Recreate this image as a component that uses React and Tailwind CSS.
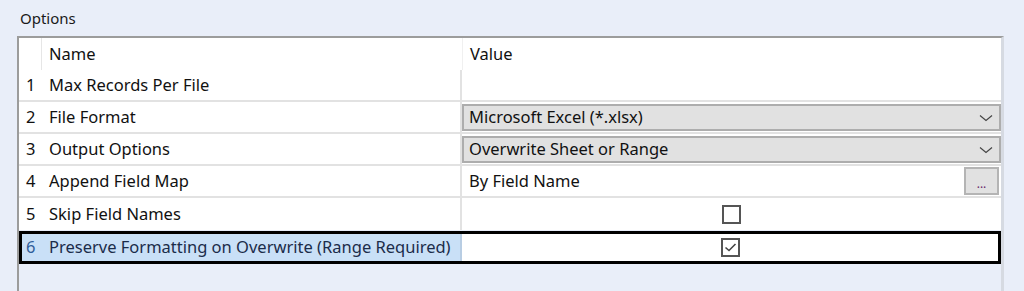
import React from 'react';

const rows = [
  { n: 1, name: 'Max Records Per File', kind: 'empty' },
  { n: 2, name: 'File Format', kind: 'combo', value: 'Microsoft Excel (*.xlsx)' },
  { n: 3, name: 'Output Options', kind: 'combo', value: 'Overwrite Sheet or Range' },
  { n: 4, name: 'Append Field Map', kind: 'button', value: 'By Field Name' },
  { n: 5, name: 'Skip Field Names', kind: 'check', checked: false },
  { n: 6, name: 'Preserve Formatting on Overwrite (Range Required)', kind: 'check', checked: true, selected: true },
];

function Chevron() {
  return (
    <svg width="14" height="8" viewBox="0 0 14 8" className="shrink-0">
      <path d="M1 1.5 L7 6.5 L13 1.5" fill="none" stroke="#444" strokeWidth="1.2" />
    </svg>
  );
}

function CheckBox({ checked }) {
  return (
    <div className="w-[19px] h-[19px] border-2 border-[#555] bg-white flex items-center justify-center">
      {checked && (
        <svg width="15" height="15" viewBox="0 0 15 15">
          <path d="M2.5 7.5 L6 10.5 L12.5 4" fill="none" stroke="#444" strokeWidth="1.6" />
        </svg>
      )}
    </div>
  );
}

function ValueCell({ row }) {
  if (row.kind === 'combo') {
    return (
      <div className="h-full pt-[2px] pb-[1px]">
        <div className="h-full bg-[#e1e1e1] border-2 border-[#adadad] flex items-center justify-between pl-[5px] pr-[6px]">
          <span>{row.value}</span>
          <Chevron />
        </div>
      </div>
    );
  }
  if (row.kind === 'button') {
    return (
      <div className="h-full flex items-center justify-between pl-[7px] pr-[2px]">
        <span>{row.value}</span>
        <div className="w-[35px] h-[28px] border-2 border-[#b4b4b4] bg-[#e1e1e1] flex items-end justify-center pb-[3px] text-[12px] leading-none text-[#6a2a6a]">
          ...
        </div>
      </div>
    );
  }
  if (row.kind === 'check') {
    return (
      <div className="h-full flex items-center justify-center">
        <CheckBox checked={row.checked} />
      </div>
    );
  }
  return <div className="h-full" />;
}

export default function App() {
  return (
    <div className="w-[1024px] h-[291px] bg-[#e9eef9] overflow-hidden flex flex-col text-[16.5px] text-[#111]" style={{ fontFamily: '"Noto Sans", "Open Sans", sans-serif' }}>
      <div className="h-[36px] pl-[20px] pt-[8px] leading-[20px] text-[15px] text-[#1a1a1a]">Options</div>
      <div className="ml-[17px] w-[987px] flex-1 border-l-2 border-t-2 border-[#9c9c9c] border-r-[3px] border-r-[#d6dae2]">
        {/* header */}
        <div className="flex h-[32px] bg-white">
          <div className="w-[23px] border-r border-[#e6e6e6]" />
          <div className="w-[420px] pl-[7px] flex items-center">Name</div>
          <div className="flex-1 pl-[7px] border-l border-[#f0f0f0] flex items-center">Value</div>
        </div>
        {rows.map((row) =>
          row.selected ? (
            <div key={row.n} className="flex h-[33px] mt-[1px] border-[3px] border-black bg-white">
              <div className="w-[20px] pl-[4px] flex items-center bg-[#c9e0f7] text-[#2f5d99]">{row.n}</div>
              <div className="w-[420px] pl-[7px] flex items-center bg-[#c9e0f7] text-[#1b2c4a] border-r-2 border-[#b8cde3]">{row.name}</div>
              <div className="flex-1">
                <ValueCell row={row} />
              </div>
            </div>
          ) : (
            <div key={row.n} className={`flex h-[32px] bg-white ${row.n === 5 ? '' : 'border-b-2 border-[#e2e2e2]'}`}>
              <div className="w-[23px] pl-[7px] flex items-center">{row.n}</div>
              <div className="w-[420px] pl-[7px] flex items-center border-r-2 border-[#e2e2e2]">{row.name}</div>
              <div className="flex-1 min-w-0">
                <ValueCell row={row} />
              </div>
            </div>
          )
        )}
      </div>
    </div>
  );
}
